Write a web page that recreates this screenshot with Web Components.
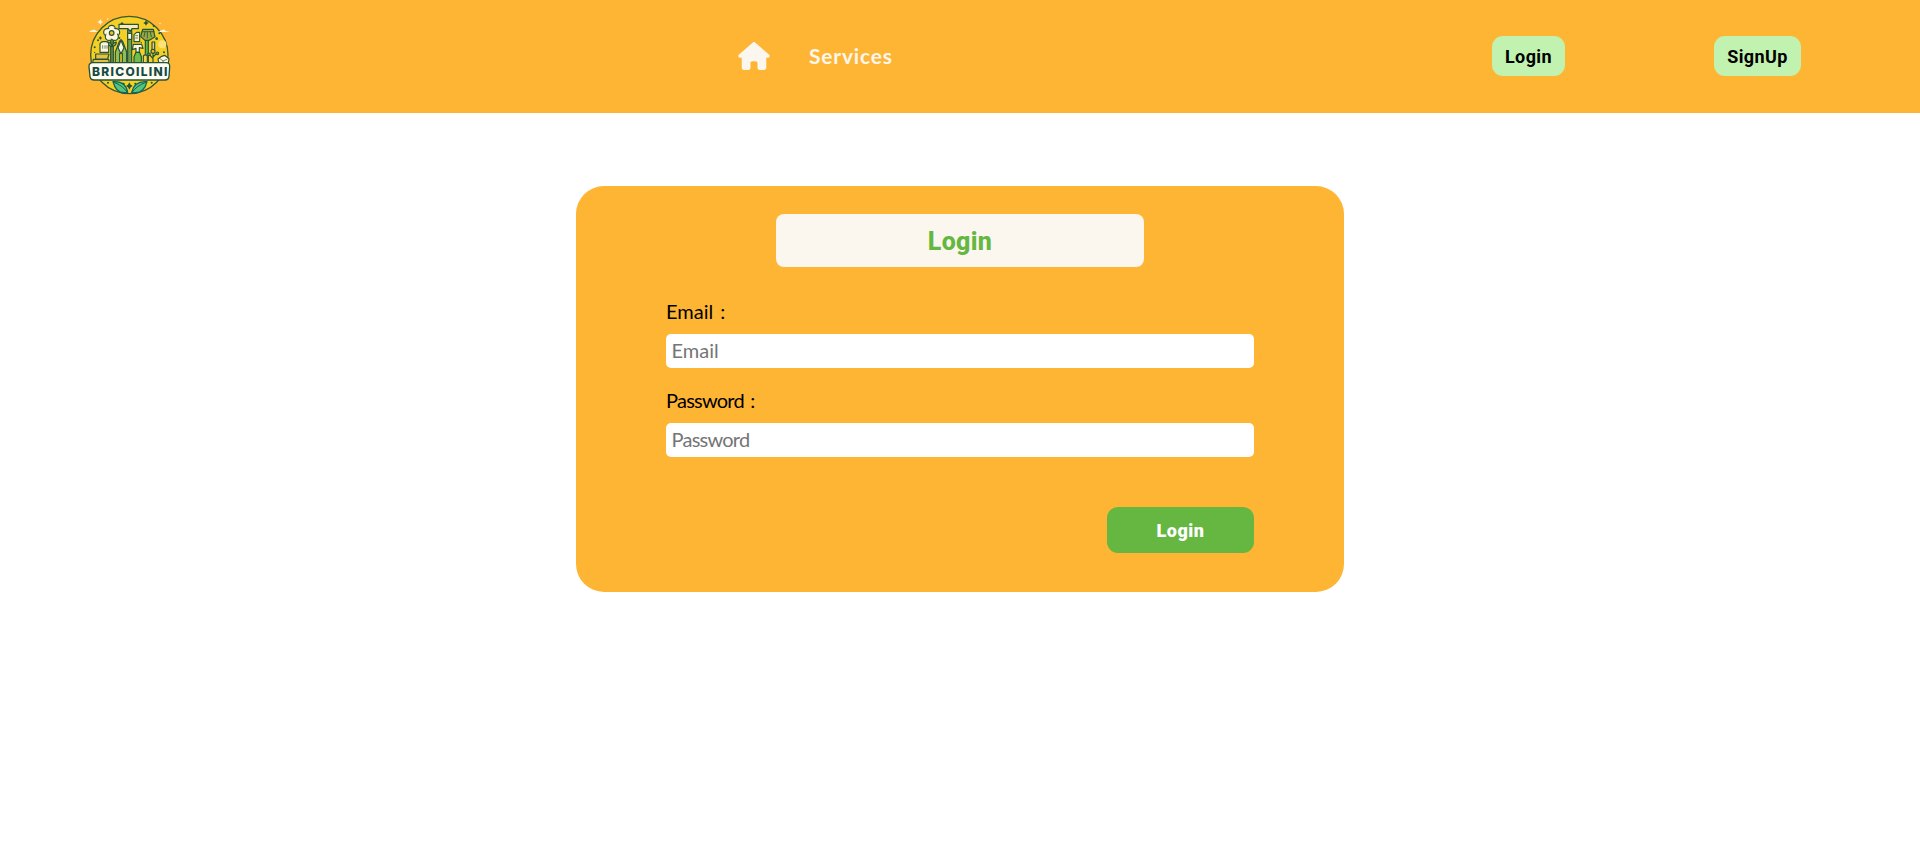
<!DOCTYPE html>
<html lang="en">
<head>
<meta charset="utf-8">
<title>Bricoilini</title>
<style>
body { margin: 0; background: #fff; font-family: "Trebuchet MS", Lato, sans-serif; color: #000; }
</style>
</head>
<body>
<site-header>
  <brand-logo slot="brand"></brand-logo>
  <home-link slot="nav"></home-link>
  <nav-link slot="nav">Services</nav-link>
  <pill-button slot="actions" style="--w:73px">Login</pill-button>
  <pill-button slot="actions" style="--w:87px">SignUp</pill-button>
</site-header>
<login-card>
  <span slot="title">Login</span>
  <form-field label="Email :" placeholder="Email" type="email" style="--track:0px"></form-field>
  <form-field label="Password :" placeholder="Password" type="password" style="--track:-.75px"></form-field>
  <submit-button slot="submit">Login</submit-button>
</login-card>
<script>
const define = (name, html, setup) => customElements.define(name, class extends HTMLElement {
  constructor() {
    super();
    this.attachShadow({ mode: 'open' }).innerHTML = html;
  }
  connectedCallback() { if (setup) setup(this); }
});

define('site-header', `
<style>
:host { display: flex; align-items: center; justify-content: space-between; box-sizing: border-box; height: 113px; padding: 0 119px 1px 80px; background: #ffb534; }
.brand { width: 100px; height: 96px; }
nav { display: flex; align-items: center; gap: 39px; width: 300px; margin-left: 558px; }
.actions { display: flex; gap: 149px; margin-left: auto; }
</style>
<div class="brand"><slot name="brand"></slot></div>
<nav><slot name="nav"></slot></nav>
<div class="actions"><slot name="actions"></slot></div>`);

define('home-link', `
<style>:host { display: block; width: 32px; height: 28px; } svg { display: block; }</style>
<svg width="32" height="28" viewBox="0 0 576 512" fill="#fbf6ee"><path d="M575.8 255.5c0 18-15 32.1-32 32.1h-32l.7 160.2c0 2.7-.2 5.4-.5 8.1V472c0 22.1-17.9 40-40 40H392c-22.1 0-40-17.9-40-40V384c0-17.7-14.3-32-32-32H256c-17.7 0-32 14.3-32 32v88c0 22.1-17.9 40-40 40H104c-22.1 0-40-17.9-40-40V287.6H32c-18 0-32-14-32-32.1c0-9 3-17 10-24L266.4 8c7-7 15-8 22-8s15 2 21 7L564.8 231.5c8 7 12 15 11 24z"/></svg>`);

define('nav-link', `
<style>:host { display: block; font-size: 21px; line-height: 28px; font-weight: 700; letter-spacing: .8px; color: #fbf6ee; }</style><slot></slot>`);

define('pill-button', `
<style>
:host { display: block; width: var(--w); height: 40px; }
button { width: 100%; height: 100%; padding: 0; border: 0; border-radius: 11px; background: #c1f2b0; color: #000; font: 700 18px/42px "Franklin Gothic Medium", Roboto, sans-serif; letter-spacing: .4px; }
</style><button><slot></slot></button>`);

define('login-card', `
<style>
:host { display: block; box-sizing: border-box; width: 768px; height: 406px; margin: 73px auto 0; padding: 28px 90px 0; border-radius: 28px; background: #ffb534; }
h1 { width: 368px; height: 53px; margin: 0 auto 28px; border-radius: 8px; background: #fbf6ee; color: #65b741; text-align: center; font: 800 25px/56px "Franklin Gothic Medium", Roboto, sans-serif; letter-spacing: .3px; }
.fields { display: flex; flex-direction: column; gap: 16px; }
.submit { display: flex; justify-content: flex-end; margin-top: 50px; }
</style>
<h1><slot name="title"></slot></h1>
<div class="fields"><slot></slot></div>
<div class="submit"><slot name="submit"></slot></div>`);

define('form-field', `
<style>
:host { display: block; height: 73px; }
label { display: block; height: 39px; font-size: 20px; line-height: 33px; letter-spacing: var(--track); word-spacing: 2px; }
input { display: block; box-sizing: border-box; width: 100%; height: 34px; padding: 0 5.5px 2px; border: 0; border-radius: 5px; background: #fff; font: 20px "Trebuchet MS", Lato, sans-serif; letter-spacing: var(--track); }
input::placeholder { color: #757575; opacity: 1; }
</style>
<label for="f"></label><input id="f">`, el => {
  el.shadowRoot.querySelector('label').textContent = el.getAttribute('label');
  const input = el.shadowRoot.querySelector('input');
  input.type = el.getAttribute('type');
  input.placeholder = el.getAttribute('placeholder');
});

define('submit-button', `
<style>
:host { display: block; width: 147px; height: 46px; }
button { width: 100%; height: 100%; padding: 0; border: 0; border-radius: 11px; background: #65b741; color: #fff; font: 900 18px/48px "Franklin Gothic Medium", Roboto, sans-serif; letter-spacing: .5px; }
</style><button><slot></slot></button>`);

define('brand-logo', `
<style>:host { display: block; } svg { display: block; }</style>
<svg width="100" height="96" viewBox="0 0 300 288" stroke-linejoin="round" stroke-linecap="round">
  <circle cx="148" cy="141" r="116" fill="#f5cf24" stroke="#35582e" stroke-width="4"/>
  <g fill="#fff6dc">
    <path d="M61 33l3 6 6 3-6 3-3 6-3-6-6-3 6-3zM28 72c3-6 8-4 10-6 5-4 8 0 10 3l7 3zM237 72c3-6 8-4 10-6 5-4 8 0 10 3l13 3z"/>
    <circle cx="83" cy="33" r="2"/><circle cx="240" cy="46" r="2"/>
    <circle cx="247" cy="109" r="12" fill="#ffe17a"/>
  </g>
  <g fill="#24533a">
    <path d="M126 41l3 5 5 3-5 3-3 5-3-5-5-3 5-3zM198 37l3 5 5 3-5 3-3 5-3-5-5-3 5-3zM61 84l2 4 4 2-4 2-2 4-2-4-4-2 4-2z"/>
    <circle cx="44" cy="118" r="3"/><circle cx="54" cy="97" r="3"/><circle cx="221" cy="54" r="3"/><circle cx="238" cy="76" r="3"/><circle cx="230" cy="92" r="4"/><circle cx="118" cy="90" r="3"/><circle cx="44" cy="133" r="2"/><circle cx="190" cy="75" r="3"/><circle cx="184" cy="104" r="2"/><circle cx="252" cy="133" r="3"/>
  </g>
  <g stroke="#24533a" stroke-width="3.5">
    <path d="M92 92h8v85h-8z" fill="#6b8f35"/>
    <path d="M96 116c-9-2-13-9-13-14 8 1 12 7 13 14c1-7 5-13 13-14 0 6-4 12-13 14" fill="#84b847"/>
    <g fill="#fff6dc"><circle cx="95" cy="63" r="11"/><circle cx="82" cy="73" r="11"/><circle cx="108" cy="73" r="11"/><circle cx="87" cy="86" r="11"/><circle cx="104" cy="86" r="11"/></g>
    <circle cx="95" cy="76" r="16" fill="#fff6dc" stroke="none"/><circle cx="95" cy="75" r="7" fill="#f5bd28"/>
    <path d="M143 65h12v112h-12z" fill="#719f4a"/><path d="M143 76h12v18h-12z" fill="#fff6dc"/>
    <path d="M117 49h58v13h-19l-5 8-7-8h-27z" fill="#fbe9bb"/>
    <path d="M196 93h9v84h-9z" fill="#56b64b"/><path d="M188 64h32l5 22-17 11h-13l-13-11z" fill="#9bab42"/>
    <path d="M195 72l-3 14m10-14v18m9-18l3 14M186 71h36" stroke-width="2.5"/>
    <path d="M162 80l8-7h9v28h-17z" fill="#fff0c2"/><path d="M167 83h6m-6 7h6" stroke-width="2"/>
    <path d="M60 133v-26q3-6 10-6h8q7 0 8 6v26z" fill="#fff6dc"/><path d="M68 113v8m7-8v8m6-8v8" stroke-width="2"/>
    <path d="M47 138h40l-4 15H47zM40 154h46l5 25H35z" fill="#e7bf43"/>
    <path d="M106 178v-46l12-32 5-5 5 5 12 32v46h-13v-42h-8v42z" fill="#91bd57"/><path d="M114 119l9 18 9-18-9-22z" fill="#fff6dc"/>
    <path d="M160 109h25l4 12-11-2v14h-10v-12l-11 4z" fill="#fff6dc"/><path d="M168 133h11l5 13v34h-22v-34z" fill="#69bf4c"/><path d="M190 144q6-7 12 0v35h-12z" fill="#f3ce48"/>
    <path d="M219 134v40m0-22l-12-14m12 9l12-12" fill="none"/><path d="M216 102h8v25h-8z" fill="#e4c982"/><circle cx="219" cy="130" r="6" fill="#f5bd28"/><circle cx="207" cy="139" r="4" fill="#84b847"/><circle cx="232" cy="136" r="4" fill="#84b847"/>
    <path d="M242 178h20l3-13 2-13-13-10-9 3-11 8 3 14z" fill="#fff6dc"/><path d="M239 151l10 8 12-5m-12 5v16" stroke-width="2" fill="none"/>
  </g>
  <path d="M99 221q38-3 44 32-34 8-44-32zM201 221q-38-3-46 32 36 8 46-32z" fill="#55c47d" stroke="#176655" stroke-width="4"/>
  <path d="M102 223q27 10 39 29M198 223q-28 10-41 29" fill="none" stroke="#176655" stroke-width="3"/>
  <path d="M148 223l4 7 6 4-6 4-4 7-4-7-6-4 6-4z" fill="#24533a"/>
  <g fill="#24533a"><circle cx="84" cy="224" r="3"/><circle cx="131" cy="227" r="3"/><circle cx="166" cy="227" r="3"/><circle cx="215" cy="224" r="3"/></g>
  <path d="M39 164h219q12 0 11 12l-2 29q-1 11-12 11H43q-12 0-13-11l-3-29q-1-12 12-12z" fill="#fffdf2" stroke="#24533a" stroke-width="4"/>
  <text x="36" y="203" textLength="226" lengthAdjust="spacing" font-family="Inter, sans-serif" font-weight="800" font-size="36" fill="#174a46">BRICOILINI</text>
</svg>`);
</script>
</body>
</html>
